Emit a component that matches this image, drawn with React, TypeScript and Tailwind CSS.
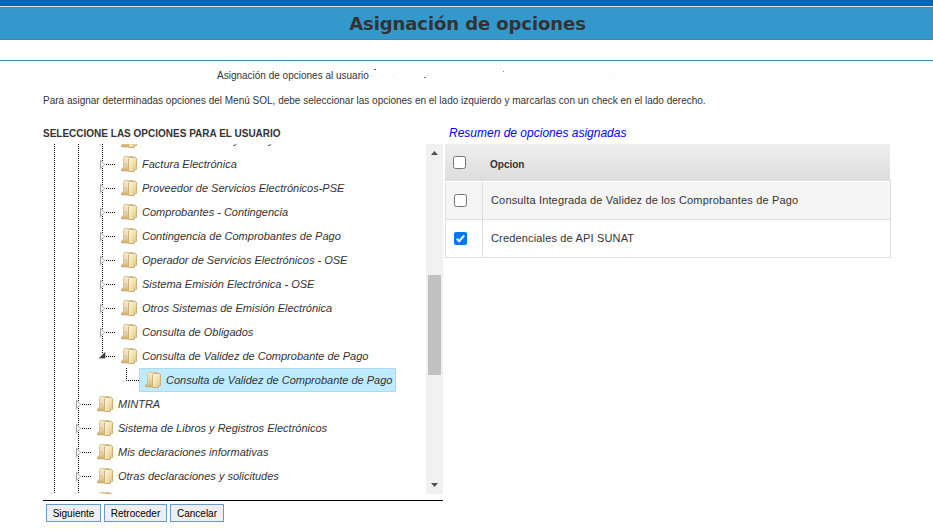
import React from "react";

type RowData = { level: number; label: string; state: "closed" | "open" | "leaf"; selected?: boolean };

const rows: RowData[] = [
  { level: 2, label: "Notas de Crédito   y Déb  y", state: "closed" },
  { level: 2, label: "Factura Electrónica", state: "closed" },
  { level: 2, label: "Proveedor de Servicios Electrónicos-PSE", state: "closed" },
  { level: 2, label: "Comprobantes - Contingencia", state: "closed" },
  { level: 2, label: "Contingencia de Comprobantes de Pago", state: "closed" },
  { level: 2, label: "Operador de Servicios Electrónicos - OSE", state: "closed" },
  { level: 2, label: "Sistema Emisión Electrónica - OSE", state: "closed" },
  { level: 2, label: "Otros Sistemas de Emisión Electrónica", state: "closed" },
  { level: 2, label: "Consulta de Obligados", state: "closed" },
  { level: 2, label: "Consulta de Validez de Comprobante de Pago", state: "open" },
  { level: 3, label: "Consulta de Validez de Comprobante de Pago", state: "leaf", selected: true },
  { level: 1, label: "MINTRA", state: "closed" },
  { level: 1, label: "Sistema de Libros y Registros Electrónicos", state: "closed" },
  { level: 1, label: "Mis declaraciones informativas", state: "closed" },
  { level: 1, label: "Otras declaraciones y solicitudes", state: "closed" },
  { level: 1, label: "", state: "closed" },
];

function Folder() {
  return (
    <svg width="16" height="16" viewBox="0 0 16 16" className="shrink-0">
      <defs>
        <linearGradient id="front" x1="0" y1="0" x2="1" y2="1">
          <stop offset="0" stopColor="#fffbe8" />
          <stop offset="0.45" stopColor="#f3e4b4" />
          <stop offset="1" stopColor="#dcc282" />
        </linearGradient>
        <linearGradient id="back" x1="0" y1="0" x2="0" y2="1">
          <stop offset="0" stopColor="#f6ebc8" />
          <stop offset="1" stopColor="#dfc688" />
        </linearGradient>
        <linearGradient id="foot" x1="0" y1="0" x2="0" y2="1">
          <stop offset="0" stopColor="#f3e6bd" />
          <stop offset="1" stopColor="#c7a65e" />
        </linearGradient>
      </defs>
      <path d="M3.500 .5H12.500V14.500H2.500V1.500Z" fill="url(#back)" stroke="#d9c594" />
      <path d="M7.500 2.500L8.500 1.500H14.500L15.500 2.500V13.500H13.500V15.500H7.500Z" fill="url(#front)" stroke="#cbb077" />
      <path d="M2.800 8.500H4.800L5.500 11L7 12.800V15H.5V13L2.500 11Z" fill="url(#foot)" stroke="#cfb67c" strokeWidth=".7" />
    </svg>
  );
}

function Guide() {
  return (
    <svg width="24" height="24" className="shrink-0" shapeRendering="crispEdges">
      <line x1="11.5" y1="0" x2="11.5" y2="24" stroke="#000" strokeDasharray="1 1" />
    </svg>
  );
}

function Expander({ state }: { state: RowData["state"] }) {
  const lineEnd = { closed: 24, open: 9, leaf: 13 }[state];
  return (
    <svg width="24" height="24" className="shrink-0">
      <line x1="11.5" y1="0" x2="11.5" y2={lineEnd} stroke="#000" strokeDasharray="1 1" shapeRendering="crispEdges" />
      <line x1={state === "leaf" ? 11 : 15} y1="12.500" x2="24" y2="12.500" stroke="#000" strokeDasharray="1 1" shapeRendering="crispEdges" />
      {state === "closed" && <path d="M9.500 8.300V16.700L13.700 12.500Z" fill="#fff" stroke="#a6a6a6" />}
      {state === "open" && <path d="M8.500 14H14V8.500Z" fill="#404040" stroke="#222" strokeWidth=".6" />}
    </svg>
  );
}

function TreeRow({ row }: { row: RowData }) {
  return (
    <div className="flex h-6 items-center">
      {row.level === 3 ? (
        <><Guide /><Guide /><span className="w-6 shrink-0" /></>
      ) : (
        Array.from({ length: row.level }, (_, i) => <Guide key={i} />)
      )}
      <Expander state={row.state} />
      <div className={row.selected ? "flex h-6 items-center rounded-[1px] border border-[#a8daf0] bg-[#beebff] pl-[5px] pr-[3px]" : "flex h-6 items-center pl-1.5"}>
        <Folder />
        <span className="ml-[5px] whitespace-pre text-[11px] italic">{row.label}</span>
      </div>
    </div>
  );
}

function Check({ on = false }: { on?: boolean }) {
  return (
    <span className={on ? "flex size-[13px] items-center justify-center rounded-[2px] bg-[#0075ff]" : "block size-[13px] rounded-[2.5px] border border-[#767676] bg-white"}>
      {on && (
        <svg width="13" height="13" viewBox="0 0 13 13"><path d="M2.800 6.800L5.200 9.200L10.200 3.400" fill="none" stroke="#fff" strokeWidth="2" /></svg>
      )}
    </span>
  );
}

function Specks() {
  return (
    <svg width="250" height="12" className="ml-1" shapeRendering="crispEdges">
      <rect x="1" y="0" width="2" height="1" fill="#555" />
      <rect x="20" y="7" width="1" height="1" fill="#ddd" />
      <rect x="51" y="8" width="2" height="1" fill="#777" />
      <rect x="53" y="6" width="2" height="1" fill="#eee0cc" />
      <rect x="130" y="2" width="1" height="1" fill="#888" />
      <rect x="237" y="6" width="1" height="1" fill="#ddd" />
    </svg>
  );
}

export default function App() {
  return (
    <div className="h-[530px] w-[933px] overflow-hidden bg-white font-['Liberation_Sans',Arial,sans-serif] text-[#333]">
      <div className="h-1.5 bg-[#0066b3]" />
      <div className="h-px bg-[#e4e4ee]" />
      <h1 className="flex h-[33px] items-center justify-center border-y border-[#4682b4] bg-[#3399cc] pl-0.5 font-['DejaVu_Sans',Verdana,sans-serif] text-[18px] font-bold tracking-[-0.09px]">Asignación de opciones</h1>
      <div className="h-5" />
      <div className="h-px bg-[#4682b4]" />
      <div className="mt-2 ml-[217px] flex h-[13px]">
        <p className="pt-px text-[10px] leading-3">Asignación de opciones al usuario</p>
        <Specks />
      </div>
      <p className="mt-[13px] ml-[43px] h-3 whitespace-nowrap text-[10px] leading-3">Para asignar determinadas opciones del Menú SOL, debe seleccionar las opciones en el lado izquierdo y marcarlas con un check en el lado derecho.</p>
      <div className="mt-5 flex pl-[43px]">
        <div className="w-[400px]">
          <h2 className="h-[17px] whitespace-nowrap text-[10px] leading-[13px] font-bold">SELECCIONE LAS OPCIONES PARA EL USUARIO</h2>
          <div className="flex h-[350px]">
            <div className="h-[350px] w-[383px] overflow-hidden">
              <div className="-mt-4">{rows.map((r, i) => <TreeRow key={i} row={r} />)}</div>
            </div>
            <div className="flex w-[17px] flex-col items-center bg-[#f1f1f1] pt-[7px]">
              <svg width="7" height="4"><path d="M0 4L3.500 0L7 4Z" fill="#505050" /></svg>
              <div className="mt-[120px] h-[100px] w-[13px] bg-[#c1c1c1]" />
              <svg width="7" height="4" className="mt-[108px]"><path d="M0 0L3.500 4L7 0Z" fill="#505050" /></svg>
            </div>
          </div>
          <div className="mt-1.5 h-px bg-black" />
          <div className="mt-[3px] ml-[3px] flex gap-[3px] text-[10px] text-black">
            <button className="h-[18px] w-[55px] border border-[#6699cc] bg-[#efefef]">Siguiente</button>
            <button className="h-[18px] w-[63px] border border-[#6699cc] bg-[#efefef]">Retroceder</button>
            <button className="h-[18px] w-[54px] border border-[#6699cc] bg-[#efefef]">Cancelar</button>
          </div>
        </div>
        <div className="ml-0.5 w-[446px]">
          <h2 className="h-[17px] pl-1 text-[12px] leading-[13px] whitespace-nowrap text-[#0000ff] italic">Resumen de opciones asignadas</h2>
          <div className="flex h-[37px] w-[445px] items-center bg-linear-to-b from-[#efefef] to-[#dcdcdc] pl-2 text-[10px] font-bold">
            <Check /><span className="mt-1 ml-6">Opcion</span>
          </div>
          <div className="-mt-px border border-[#dfdfdf] pt-px text-[11px] tracking-[0.16px]">
            <div className="flex h-[38px] items-center border-b border-[#dfdfdf] bg-[#f5f5f5]">
              <div className="flex h-full w-[37px] items-center border-r border-[#dfdfdf] pl-2"><Check /></div>
              <span className="ml-2">Consulta Integrada de Validez de los Comprobantes de Pago</span>
            </div>
            <div className="flex h-[37px] items-center">
              <div className="flex h-full w-[37px] items-center border-r border-[#dfdfdf] pl-2"><Check on /></div>
              <span className="ml-2">Credenciales de API SUNAT</span>
            </div>
          </div>
        </div>
      </div>
    </div>
  );
}
